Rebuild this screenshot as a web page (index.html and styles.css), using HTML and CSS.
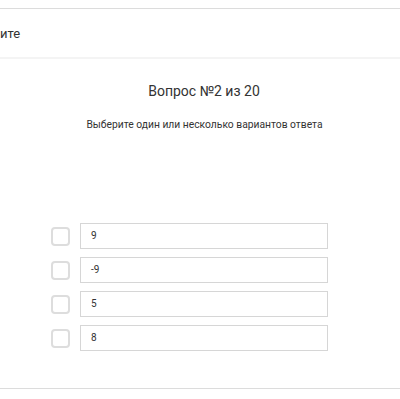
FILE: index.html
```html
<!DOCTYPE html>
<html lang="ru">
<head>
    <meta charset="UTF-8">
    <meta name="viewport" content="width=device-width, initial-scale=1.0">
    <title>Вопрос №2 из 20</title>
    <link rel="stylesheet" href="styles.css">
</head>
<body>

<div class="topbar">
    <span class="back-text">ите</span>
</div>

<div class="question">
    <h2 class="question-title">Вопрос №2 из 20</h2>
    <p class="question-hint">Выберите один или несколько вариантов ответа</p>

    <ul class="answers">
        <li class="answer">
            <span class="check"></span>
            <div class="answer-box">9</div>
        </li>
        <li class="answer">
            <span class="check"></span>
            <div class="answer-box">-9</div>
        </li>
        <li class="answer">
            <span class="check"></span>
            <div class="answer-box">5</div>
        </li>
        <li class="answer">
            <span class="check"></span>
            <div class="answer-box">8</div>
        </li>
    </ul>
</div>

<div class="bottom-line"></div>

</body>
</html>
```

FILE: styles.css
```css
body {
    font-family: Roboto, "Open Sans", Arial, sans-serif;
    background-color: #fff;
    color: #333;
    margin: 0;
    padding: 8px 0 0;
}
.topbar {
    border-top: 1px solid #dcdcdc;
    border-bottom: 2px solid #f4f4f4;
    height: 48px;
    display: flex;
    align-items: center;
}
.back-text {
    font-size: 13px;
    color: #333;
}
.question {
    text-align: center;
    padding-top: 22px;
}
.question-title {
    font-size: 14px;
    font-weight: normal;
    margin: 0 0 0 8px;
    line-height: 20px;
}
.question-hint {
    font-size: 10.3px;
    margin: 17px 0 0 9px;
    line-height: 14px;
}
.answers {
    list-style-type: none;
    padding: 0;
    margin: 91px 0 0 51px;
    width: 277px;
}
.answer {
    display: flex;
    align-items: center;
    margin-bottom: 8px;
}
.check {
    width: 15px;
    height: 15px;
    border: 2px solid #ddd;
    border-radius: 4px;
    flex-shrink: 0;
}
.answer-box {
    flex: 1;
    margin-left: 10px;
    height: 24px;
    border: 1px solid #d6d6d6;
    text-align: left;
    font-size: 10px;
    line-height: 24px;
    padding-left: 10px;
}
.bottom-line {
    margin-top: 37px;
    border-top: 1px solid #dcdcdc;
}
```
